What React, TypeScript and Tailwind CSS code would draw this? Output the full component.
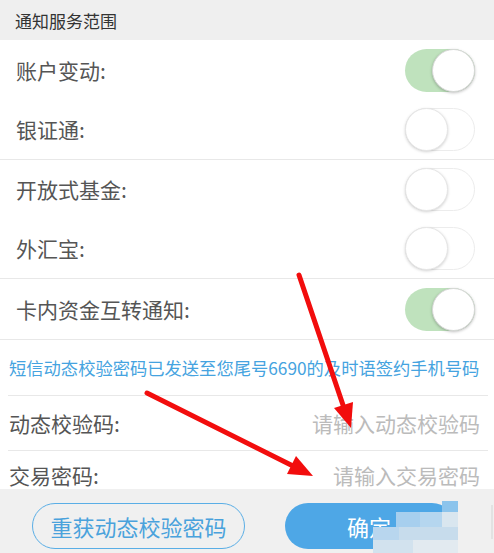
import React from 'react';

const Toggle: React.FC<{ on: boolean }> = ({ on }) => {
    if (on) {
        return (
            <div className="relative w-[70px] h-[43px] rounded-full bg-[#bfe2bd]">
                <div className="absolute right-0 top-0 w-[43px] h-[43px] rounded-full bg-white border border-[#d8d8d8] shadow-[0_1px_3px_rgba(0,0,0,0.25)]"></div>
            </div>
        );
    }
    return (
        <div className="relative w-[70px] h-[43px] rounded-full bg-white border border-[#ececec]">
            <div className="absolute -left-px -top-px w-[43px] h-[43px] rounded-full bg-white border border-[#e6e6e6] shadow-[0_1px_3px_rgba(0,0,0,0.18)]"></div>
        </div>
    );
};

const ToggleRow: React.FC<{ label: string; on: boolean; height: string; border?: boolean }> = ({
    label,
    on,
    height,
    border,
}) => (
    <div className={`flex items-center justify-between pl-[16px] pr-[19px] ${height} ${border ? 'border-b border-[#e8e8e8]' : ''}`}>
        <span className="text-[21px] leading-none text-[#555]">{label}</span>
        <Toggle on={on} />
    </div>
);

// pixelated blur over the right half of the confirm button
const mosaic: { x: number; y: number; w: number; h: number; c: string }[] = [
    { x: 442, y: 501, w: 16, h: 11, c: '#8cc4ec' },
    { x: 396, y: 512, w: 24, h: 15, c: '#a7cfee' },
    { x: 420, y: 512, w: 22, h: 15, c: '#b5d6ef' },
    { x: 442, y: 512, w: 16, h: 15, c: '#d9e6ef' },
    { x: 373, y: 527, w: 26, h: 13, c: '#b8d6ee' },
    { x: 399, y: 527, w: 59, h: 13, c: '#c7dcec' },
    { x: 373, y: 540, w: 40, h: 13, c: '#d2e2ee' },
    { x: 413, y: 540, w: 45, h: 13, c: '#e2eaf0' },
];

const App: React.FC = () => {
    return (
        <div className="relative w-[494px] h-[553px] overflow-hidden bg-white font-['Noto_Sans_CJK_SC',sans-serif]">
            <div className="h-[40px] bg-[#efefef] flex items-center pl-[15px]">
                <span className="text-[17px] leading-none text-[#333]">通知服务范围</span>
            </div>

            <ToggleRow label="账户变动:" on={true} height="h-[60px]" />
            <ToggleRow label="银证通:" on={false} height="h-[60px]" border />
            <ToggleRow label="开放式基金:" on={false} height="h-[59px]" />
            <ToggleRow label="外汇宝:" on={false} height="h-[60px]" border />
            <ToggleRow label="卡内资金互转通知:" on={true} height="h-[61px]" border />

            <div className="h-[55px] flex items-center pl-[9px]">
                <span className="text-[17.3px] leading-none text-[#45a3e0] whitespace-nowrap">
                    短信动态校验密码已发送至您尾号6690的及时语签约手机号码
                </span>
            </div>
            <div className="h-px ml-[8px] mr-[6px] bg-[#e8e8e8]"></div>

            <div className="h-[54px] flex items-center justify-between pl-[9px] pr-[14px]">
                <span className="text-[21px] leading-none text-[#555]">动态校验码:</span>
                <span className="text-[21px] leading-none text-[#bbb]">请输入动态校验码</span>
            </div>
            <div className="h-px ml-[8px] mr-[6px] bg-[#e8e8e8]"></div>

            <div className="h-[38px] flex items-start justify-between pl-[9px] pr-[14px] pt-[14px]">
                <span className="text-[21px] leading-none text-[#555]">交易密码:</span>
                <span className="text-[21px] leading-none text-[#bbb]">请输入交易密码</span>
            </div>

            <div className="h-[64px] bg-[#f0f0f0] flex items-start pt-[14px]">
                <button className="ml-[32px] w-[213px] h-[46px] rounded-full border-[1.5px] border-[#5aaee6] bg-transparent flex items-center justify-center">
                    <span className="text-[22px] leading-none text-[#4aa2dc]">重获动态校验密码</span>
                </button>
                <button className="ml-[40px] w-[170px] h-[46px] rounded-full bg-[#4ea7e6] flex items-center justify-center">
                    <span className="text-[22px] leading-none text-white pr-[2px]">确定</span>
                </button>
                <div className="ml-[36px] mt-[2px] w-[2px] h-[34px] bg-[#e2e2e2]"></div>
            </div>

            {mosaic.map((m, i) => (
                <div
                    key={i}
                    className="absolute"
                    style={{ left: m.x, top: m.y, width: m.w, height: m.h, backgroundColor: m.c }}
                ></div>
            ))}

            <svg className="absolute inset-0 pointer-events-none" width="494" height="553" viewBox="0 0 494 553">
                <line x1="299" y1="275" x2="344" y2="408" stroke="#f20d0d" strokeWidth="5" strokeLinecap="round" />
                <polygon points="351,428 353,402 334,408" fill="#f20d0d" />
                <line x1="147" y1="393" x2="293" y2="466" stroke="#f20d0d" strokeWidth="5" strokeLinecap="round" />
                <polygon points="313,476 287,474 296,456" fill="#f20d0d" />
            </svg>
        </div>
    );
};

export default App;
